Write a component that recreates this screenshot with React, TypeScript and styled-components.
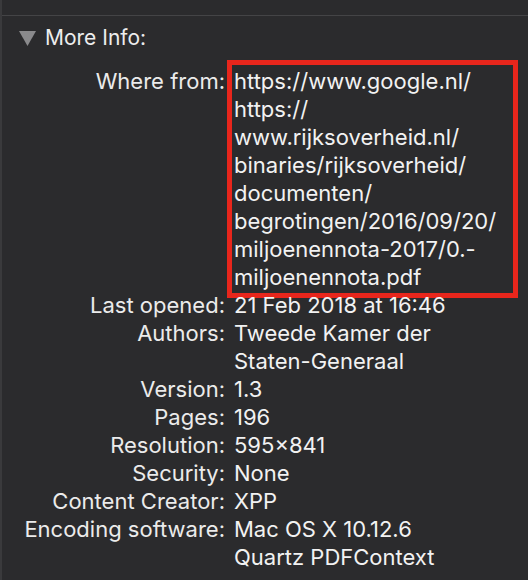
import React from "react";
import styled, { createGlobalStyle, css } from "styled-components";

const GlobalStyle = createGlobalStyle`
  html, body {
    margin: 0;
    padding: 0;
    background: #2b2b2d;
  }
  body {
    font-family: Inter, "Noto Sans", "Liberation Sans", sans-serif;
    -webkit-font-smoothing: antialiased;
  }
`;

const Panel = styled.div`
  min-height: 580px;
  box-sizing: border-box;
  border-left: 2px solid #3a3a3c;
  background: #2b2b2d;
  color: #eeeeee;
  font-size: 22px;
  line-height: 28px;
`;

const TopStrip = styled.div`
  height: 15px;
  border-bottom: 1px solid #444446;
`;

const Header = styled.div`
  display: flex;
  align-items: center;
  gap: 9px;
  padding: 8px 0 0 17px;
`;

const Disclosure = styled.svg`
  width: 17px;
  height: 15px;
  flex: none;
`;

const Title = styled.span`
  color: #ededed;
  font-size: 21px;
`;

const InfoGrid = styled.dl`
  display: grid;
  grid-template-columns: 223px 277px;
  column-gap: 9px;
  margin: 15px 0 0;
`;

const Label = styled.dt`
  text-align: right;
  white-space: nowrap;
  color: #ebebeb;
`;

const Value = styled.dd<{ $highlighted?: boolean }>`
  margin: 0;
  color: #f2f2f2;
  ${({ $highlighted }) =>
    $highlighted &&
    css`
      outline: 5px solid #e8261c;
      outline-offset: 2px;
    `}
`;

const Line = styled.div`
  white-space: nowrap;
`;

interface InfoRow {
  label: string;
  lines: string[];
  highlighted?: boolean;
}

const rows: InfoRow[] = [
  {
    label: "Where from:",
    lines: [
      "https://www.google.nl/",
      "https://",
      "www.rijksoverheid.nl/",
      "binaries/rijksoverheid/",
      "documenten/",
      "begrotingen/2016/09/20/",
      "miljoenennota-2017/0.-",
      "miljoenennota.pdf",
    ],
    highlighted: true,
  },
  { label: "Last opened:", lines: ["21 Feb 2018 at 16:46"] },
  { label: "Authors:", lines: ["Tweede Kamer der", "Staten-Generaal"] },
  { label: "Version:", lines: ["1.3"] },
  { label: "Pages:", lines: ["196"] },
  { label: "Resolution:", lines: ["595\u00d7841"] },
  { label: "Security:", lines: ["None"] },
  { label: "Content Creator:", lines: ["XPP"] },
  { label: "Encoding software:", lines: ["Mac OS X 10.12.6", "Quartz PDFContext"] },
];

export default function App() {
  return (
    <>
      <GlobalStyle />
      <Panel>
        <TopStrip />
        <Header>
          <Disclosure viewBox="0 0 17 15">
            <path d="M0 0 H17 L8.5 15 Z" fill="#8a8a8c" />
          </Disclosure>
          <Title>More Info:</Title>
        </Header>
        <InfoGrid>
          {rows.map((row) => (
            <React.Fragment key={row.label}>
              <Label>{row.label}</Label>
              <Value $highlighted={row.highlighted}>
                {row.lines.map((line) => (
                  <Line key={line}>{line}</Line>
                ))}
              </Value>
            </React.Fragment>
          ))}
        </InfoGrid>
      </Panel>
    </>
  );
}
